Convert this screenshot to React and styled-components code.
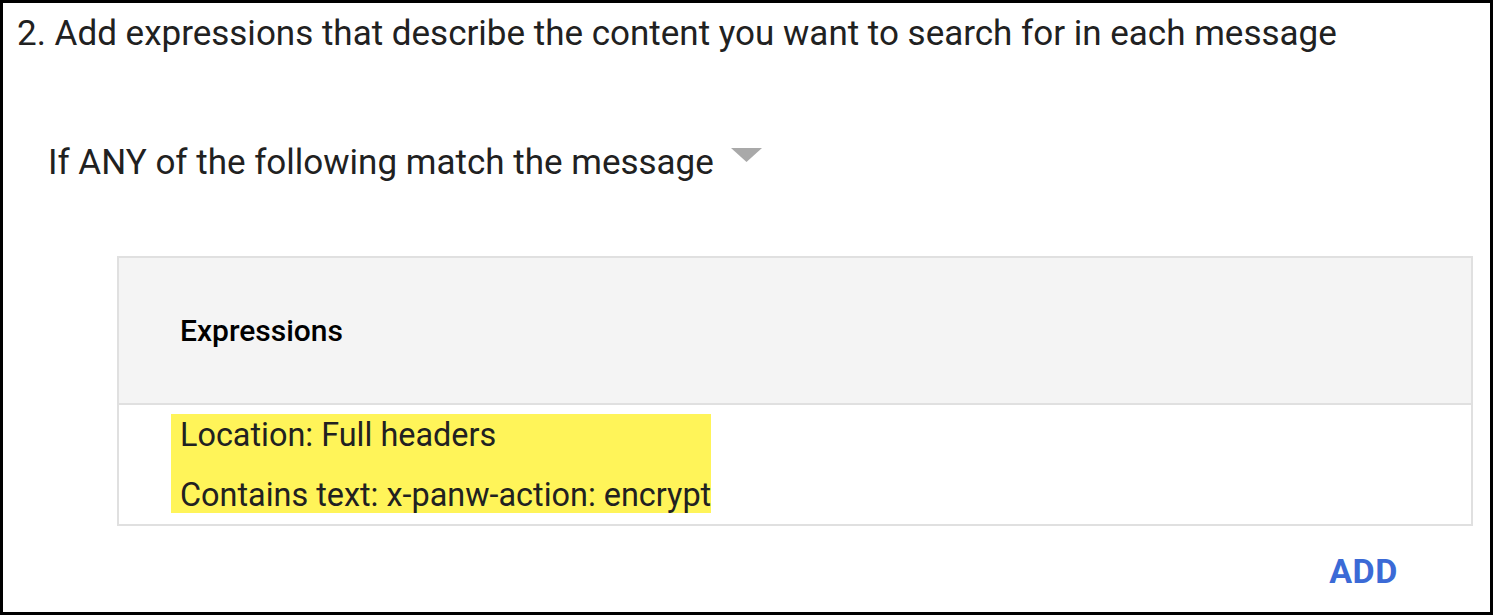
import React from "react";
import styled, { createGlobalStyle } from "styled-components";

const Global = createGlobalStyle`
  html, body { margin: 0; padding: 0; background: #fff; }
  body { font-family: Roboto, "Noto Sans", Arial, sans-serif; color: #202124; }
  * { box-sizing: border-box; }
`;

const Frame = styled.div`
  width: 1493px;
  height: 615px;
  border: 3px solid #000;
  background: #fff;
  display: flex;
  flex-direction: column;
`;

const Heading = styled.div`
  margin-top: 11px;
  padding-left: 14px;
  font-size: 35px;
  line-height: 40px;
  color: #212121;
  white-space: nowrap;
`;

const MatchRow = styled.div`
  margin-top: 89px;
  padding-left: 45px;
  display: flex;
  align-items: flex-start;
  gap: 17px;
`;

const MatchLabel = styled.span`
  font-size: 35px;
  line-height: 40px;
  color: #212121;
  white-space: nowrap;
`;

const Caret = styled.svg`
  margin-top: 5px;
  flex: none;
`;

const Table = styled.div`
  margin-top: 73px;
  margin-left: 114px;
  width: 1356px;
  border: 2px solid #e0e0e0;
  display: flex;
  flex-direction: column;
`;

const HeaderCell = styled.div`
  height: 145px;
  background: #f4f4f4;
  border-bottom: 2px solid #e0e0e0;
  display: flex;
  align-items: center;
  padding-left: 61px;
  font-size: 30px;
  font-weight: 500;
  color: #000;
  box-sizing: content-box;
`;

const BodyCell = styled.div`
  padding: 9px 0 11px 52px;
  display: flex;
`;

const Highlight = styled.div`
  background: #fff459;
  padding: 3px 0 0 9px;
  display: flex;
  flex-direction: column;
  gap: 24px;
`;

const Line = styled.div`
  font-size: 32.4px;
  line-height: 36px;
  color: #212121;
  white-space: nowrap;
`;

const Actions = styled.div`
  margin-top: 25px;
  display: flex;
  justify-content: flex-end;
  padding-right: 92px;
`;

const AddButton = styled.button`
  border: none;
  background: none;
  padding: 0;
  font-family: Roboto, Arial, sans-serif;
  font-size: 34px;
  line-height: 40px;
  font-weight: 700;
  letter-spacing: 0.6px;
  color: #3b6ad6;
  cursor: pointer;
`;

export default function App() {
  return (
    <>
      <Global />
      <Frame>
        <Heading>
          2. Add expressions that describe the content you want to search for in each message
        </Heading>
        <MatchRow>
          <MatchLabel>If ANY of the following match the message</MatchLabel>
          <Caret width="31" height="14" viewBox="0 0 31 14">
            <polygon points="0,0 31,0 15.5,14" fill="#a9a9a9" />
          </Caret>
        </MatchRow>
        <Table>
          <HeaderCell>Expressions</HeaderCell>
          <BodyCell>
            <Highlight>
              <Line>Location: Full headers</Line>
              <Line>Contains text: x-panw-action: encrypt</Line>
            </Highlight>
          </BodyCell>
        </Table>
        <Actions>
          <AddButton>ADD</AddButton>
        </Actions>
      </Frame>
    </>
  );
}
